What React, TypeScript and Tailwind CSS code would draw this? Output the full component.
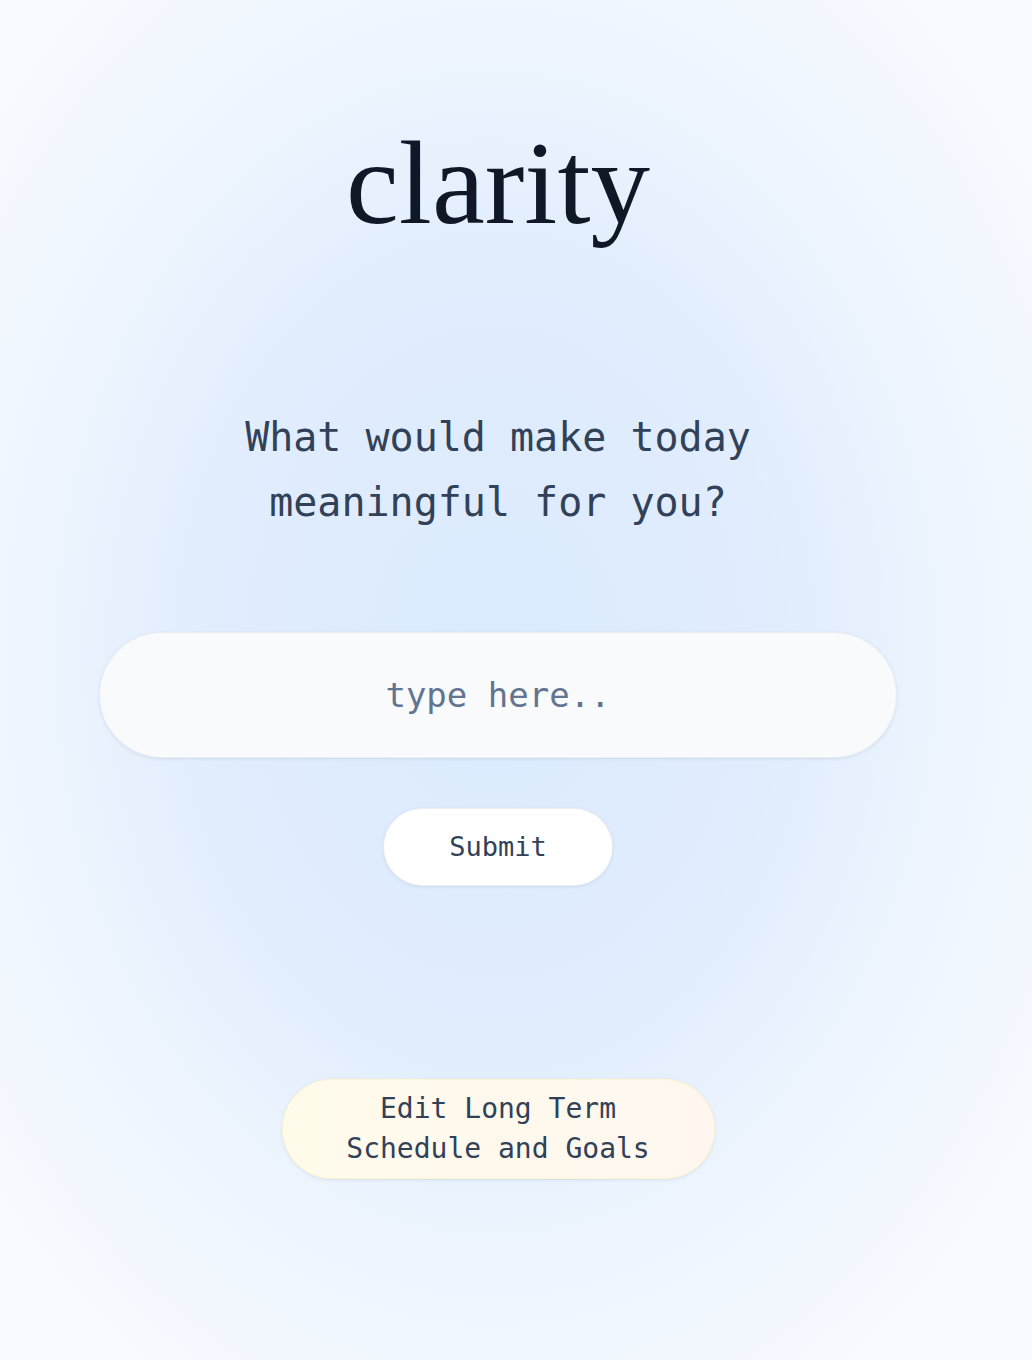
import React, { useState } from "react";

const mono = "font-['DejaVu_Sans_Mono','Liberation_Mono',monospace]";

const App: React.FC = () => {
  const [text, setText] = useState("");

  return (
    <main className="min-h-screen w-full bg-[radial-gradient(ellipse_at_48%_48%,#dbeafe_0%,#e1edfd_38%,#eef5fe_62%,#f8fbff_88%)]">
      <div className="flex flex-col items-center pr-9 pt-[124px] pb-20">
        {/* title */}
        <h1 className="font-['Liberation_Serif','Times_New_Roman',serif] text-[119px] leading-none text-gray-900">
          clarity
        </h1>

        {/* prompt */}
        <p className={`${mono} mt-[162px] text-center text-[40px] leading-[65px] text-slate-700`}>
          What would make today
          <br />
          meaningful for you?
        </p>

        {/* input */}
        <input
          value={text}
          onChange={(e) => setText(e.target.value)}
          placeholder="type here.."
          className={`${mono} mt-[97px] h-[126px] w-[798px] rounded-full border border-slate-200/70 bg-slate-50 text-center text-[34px] text-slate-700 shadow-[0_1px_3px_rgba(148,163,184,0.25)] outline-none placeholder:text-slate-500`}
        />

        <button
          className={`${mono} mt-[50px] h-[78px] w-[230px] rounded-full border border-slate-200/70 bg-white text-[27px] text-slate-700 shadow-[0_1px_3px_rgba(148,163,184,0.25)]`}
        >
          Submit
        </button>

        {/* long term */}
        <button
          className={`${mono} mt-[193px] h-[100px] w-[433px] rounded-full border border-amber-100/80 bg-gradient-to-r from-[#fffbeb] to-[#fff7ef] px-10 text-center text-[28px] leading-[40px] text-slate-700 shadow-[0_1px_3px_rgba(148,163,184,0.25)]`}
        >
          Edit Long Term Schedule and Goals
        </button>
      </div>
    </main>
  );
};

export default App;
